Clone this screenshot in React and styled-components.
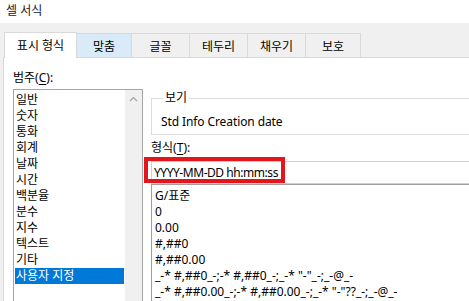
import React from "react";
import styled, { createGlobalStyle } from "styled-components";

const Global = createGlobalStyle`
  html, body { margin: 0; padding: 0; background: #ffffff; }
  body { font-family: "Noto Sans", "Noto Sans CJK KR", sans-serif; font-size: 12px; color: #000; }
  * { box-sizing: border-box; }
`;

const Window = styled.div`
  width: 469px;
  height: 301px;
  overflow: hidden;
  display: flex;
  flex-direction: column;
  font-family: "Noto Sans", "Noto Sans CJK KR", sans-serif;
  font-size: 12px;
`;

const TitleBar = styled.div`
  height: 23px;
  flex: none;
  display: flex;
  align-items: center;
  padding-left: 6px;
  padding-bottom: 4px;
  background: #ffffff;
  font-size: 12px;
  color: #1a1a1a;
`;

const Body = styled.div`
  flex: 1;
  display: flex;
  flex-direction: column;
  background: #f0f0f0;
  padding: 9px 0 0 3px;
  min-height: 0;
`;

const TabRow = styled.div`
  display: flex;
  align-items: flex-end;
  height: 25px;
  flex: none;
  padding-left: 1px;
`;

const Tab = styled.div`
  position: relative;
  width: ${(p) => p.$w}px;
  height: ${(p) => (p.$active ? 26 : 24)}px;
  margin-left: -1px;
  margin-bottom: ${(p) => (p.$active ? -1 : 0)}px;
  z-index: ${(p) => (p.$active ? 2 : 1)};
  display: flex;
  align-items: center;
  justify-content: center;
  padding-bottom: ${(p) => (p.$active ? 2 : 0)}px;
  border: 1px solid ${(p) => (p.$hover ? "#c6dcf2" : "#d9d9d9")};
  border-bottom: none;
  background: ${(p) => (p.$active ? "#ffffff" : p.$hover ? "#d9eaf9" : "#f0f0f0")};
  &:first-child { margin-left: 0; }
`;

const Panel = styled.div`
  flex: 1;
  display: flex;
  align-items: flex-start;
  background: #ffffff;
  border-top: 1px solid #d9d9d9;
  border-left: 1px solid #d9d9d9;
  padding: 12px 0 0 9px;
  overflow: hidden;
  min-height: 0;
`;

const LeftColumn = styled.div`
  width: 130px;
  flex: none;
  display: flex;
  flex-direction: column;
`;

const Label = styled.div`
  height: 16px;
  line-height: 16px;
  white-space: nowrap;
  u { text-decoration-thickness: 1px; text-underline-offset: 2px; }
`;

const ListBox = styled.div`
  display: flex;
  margin-top: ${(p) => p.$mt || 0}px;
  height: 240px;
  border: 1px solid #a5a5a5;
  background: #ffffff;
`;

const Items = styled.div`
  flex: 1;
  display: flex;
  flex-direction: column;
  padding: ${(p) => p.$pt}px 1px 0 1px;
  min-width: 0;
`;

const Item = styled.div`
  height: 16px;
  line-height: 16px;
  padding-left: ${(p) => p.$pl || 1}px;
  white-space: nowrap;
  background: ${(p) => (p.$selected ? "#0078d7" : "transparent")};
  color: ${(p) => (p.$selected ? "#ffffff" : "#000000")};
`;

const ScrollBar = styled.div`
  width: 17px;
  flex: none;
  background: #f0f0f0;
  display: flex;
  flex-direction: column;
  align-items: center;
`;

const ScrollButton = styled.div`
  width: 17px;
  height: 17px;
  display: flex;
  align-items: center;
  justify-content: center;
`;

const RightColumn = styled.div`
  width: 330px;
  flex: none;
  margin-left: 8px;
  display: flex;
  flex-direction: column;
`;

const GroupBox = styled.fieldset`
  margin: 20px 0 0 0;
  padding: 8px 0 4px 9px;
  border: 1px solid #dcdcdc;
  min-width: 0;
`;

const Legend = styled.legend`
  padding: 0 2px;
  margin-left: 2px;
  height: 16px;
  line-height: 16px;
`;

const PreviewText = styled.div`
  height: 16px;
  line-height: 16px;
  white-space: nowrap;
  letter-spacing: -0.1px;
`;

const FormatLabel = styled(Label)`
  margin-top: 5px;
`;

const InputWrap = styled.div`
  position: relative;
  margin-top: 5px;
`;

const Input = styled.div`
  height: 23px;
  border: 1px solid #cfcfcf;
  padding-left: 2px;
  display: flex;
  align-items: center;
  white-space: nowrap;
  letter-spacing: -0.45px;
  background: #ffffff;
`;

const Highlight = styled.div`
  position: absolute;
  left: -7px;
  top: -4px;
  width: 141px;
  height: 26px;
  border: 4px solid #e3161e;
  pointer-events: none;
`;

const FormatList = styled(ListBox)`
  border-color: #a0a0a0;
  height: 120px;
`;

const categories = ["일반", "숫자", "통화", "회계", "날짜", "시간", "백분율", "분수", "지수", "텍스트", "기타", "사용자 지정"];
const formats = [
  "G/표준",
  "0",
  "0.00",
  "#,##0",
  "#,##0.00",
  '_-* #,##0_-;-* #,##0_-;_-* "-"_-;_-@_-',
  '_-* #,##0.00_-;-* #,##0.00_-;_-* "-"??_-;_-@_-',
];

const tabs = [
  { t: "표시 형식", w: 73, active: true },
  { t: "맞춤", w: 56, hover: true },
  { t: "글꼴", w: 59 },
  { t: "테두리", w: 59 },
  { t: "채우기", w: 59 },
  { t: "보호", w: 56 },
];

export default function App() {
  return (
    <>
      <Global />
      <Window>
        <TitleBar>셀 서식</TitleBar>
        <Body>
          <TabRow>
            {tabs.map((tb) => (
              <Tab key={tb.t} $w={tb.w} $active={tb.active} $hover={tb.hover}>
                {tb.t}
              </Tab>
            ))}
          </TabRow>
          <Panel>
            <LeftColumn>
              <Label>
                범주(<u>C</u>):
              </Label>
              <ListBox $mt={3}>
                <Items $pt={2}>
                  {categories.map((c, i) => (
                    <Item key={c} $selected={i === categories.length - 1}>
                      {c}
                    </Item>
                  ))}
                </Items>
                <ScrollBar>
                  <ScrollButton>
                    <svg width="9" height="6" viewBox="0 0 9 6">
                      <path d="M1 5 L4.5 1.5 L8 5" fill="none" stroke="#a3a3a3" strokeWidth="1.2" />
                    </svg>
                  </ScrollButton>
                </ScrollBar>
              </ListBox>
            </LeftColumn>
            <RightColumn>
              <GroupBox>
                <Legend>보기</Legend>
                <PreviewText>Std Info Creation date</PreviewText>
              </GroupBox>
              <FormatLabel>
                형식(<u>T</u>):
              </FormatLabel>
              <InputWrap>
                <Input>YYYY-MM-DD hh:mm:ss</Input>
                <Highlight />
              </InputWrap>
              <FormatList>
                <Items $pt={3}>
                  {formats.map((f) => (
                    <Item key={f} $pl={2}>
                      {f}
                    </Item>
                  ))}
                </Items>
              </FormatList>
            </RightColumn>
          </Panel>
        </Body>
      </Window>
    </>
  );
}
